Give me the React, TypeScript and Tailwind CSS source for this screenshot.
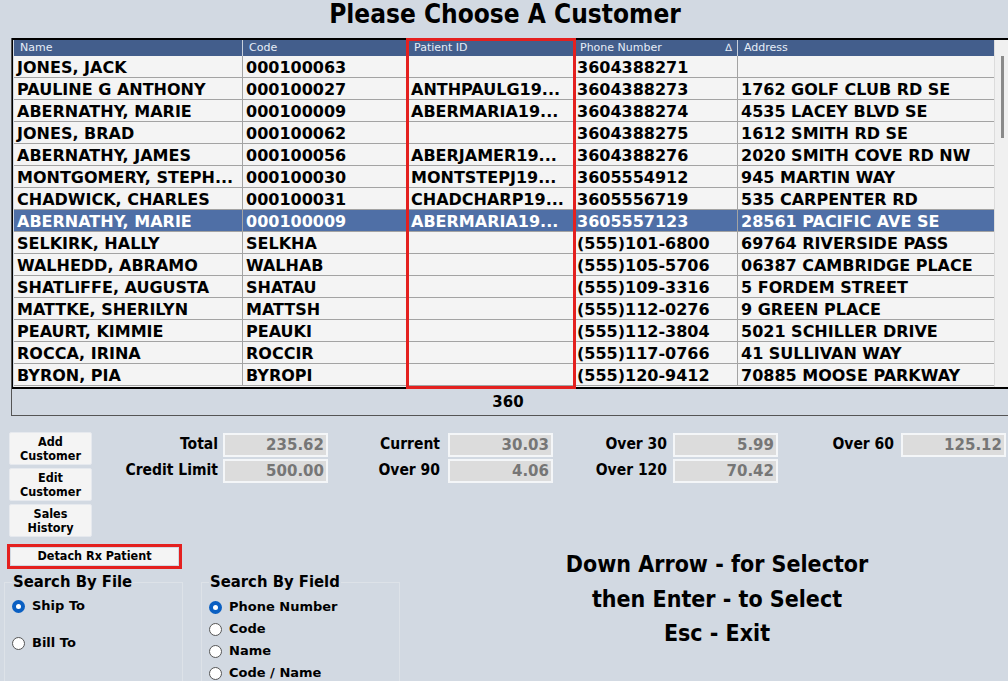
import React from "react";

const rows = [
  ["JONES, JACK", "000100063", "", "3604388271", ""],
  ["PAULINE G ANTHONY", "000100027", "ANTHPAULG19...", "3604388273", "1762 GOLF CLUB RD SE"],
  ["ABERNATHY, MARIE", "000100009", "ABERMARIA19...", "3604388274", "4535 LACEY BLVD SE"],
  ["JONES, BRAD", "000100062", "", "3604388275", "1612 SMITH RD SE"],
  ["ABERNATHY, JAMES", "000100056", "ABERJAMER19...", "3604388276", "2020 SMITH COVE RD NW"],
  ["MONTGOMERY, STEPH...", "000100030", "MONTSTEPJ19...", "3605554912", "945 MARTIN WAY"],
  ["CHADWICK, CHARLES", "000100031", "CHADCHARP19...", "3605556719", "535 CARPENTER RD"],
  ["ABERNATHY, MARIE", "000100009", "ABERMARIA19...", "3605557123", "28561 PACIFIC AVE SE"],
  ["SELKIRK, HALLY", "SELKHA", "", "(555)101-6800", "69764 RIVERSIDE PASS"],
  ["WALHEDD, ABRAMO", "WALHAB", "", "(555)105-5706", "06387 CAMBRIDGE PLACE"],
  ["SHATLIFFE, AUGUSTA", "SHATAU", "", "(555)109-3316", "5 FORDEM STREET"],
  ["MATTKE, SHERILYN", "MATTSH", "", "(555)112-0276", "9 GREEN PLACE"],
  ["PEAURT, KIMMIE", "PEAUKI", "", "(555)112-3804", "5021 SCHILLER DRIVE"],
  ["ROCCA, IRINA", "ROCCIR", "", "(555)117-0766", "41 SULLIVAN WAY"],
  ["BYRON, PIA", "BYROPI", "", "(555)120-9412", "70885 MOOSE PARKWAY"],
];

const wide = { fontFamily: '"DejaVu Sans", Verdana, sans-serif' } as React.CSSProperties;
const tah = { fontFamily: '"DejaVu Sans Condensed", "DejaVu Sans", Tahoma, sans-serif', fontStretch: "condensed" } as React.CSSProperties;

function Field({ label, value, lw }: { label: string; value: string; lw: string }) {
  return (
    <div className="flex items-center h-[26px]">
      <div className={`${lw} text-right pr-[5px] text-[15.5px] font-bold text-black whitespace-nowrap`} style={tah}>{label}</div>
      <div className="w-[105px] h-[24px] bg-[#dcdcdc] border-2 border-[#f4f6f8] flex items-center justify-end pr-[2px] text-[15px] font-bold text-[#767676]" style={wide}>
        {value}
      </div>
    </div>
  );
}

function Btn({ children }: { children: React.ReactNode }) {
  return (
    <div className="w-[83px] h-[33px] bg-[#f4f4f4] rounded-[2px] border border-[#e6e9ee] flex flex-col items-center justify-center leading-[14px] text-[12.5px] font-bold text-black" style={tah}>
      {children}
    </div>
  );
}

function Radio({ checked, label, cls }: { checked?: boolean; label: string; cls?: string }) {
  return (
    <div className={`flex items-center gap-[7px] h-[16px] ${cls ?? ""}`}>
      {checked ? (
        <div className="w-[13px] h-[13px] rounded-full bg-[#0a5fc2] flex items-center justify-center">
          <div className="w-[5px] h-[5px] rounded-full bg-white" />
        </div>
      ) : (
        <div className="w-[13px] h-[13px] rounded-full bg-white border border-[#555]" />
      )}
      <span className="text-[13px] font-bold text-black leading-[16px]" style={wide}>{label}</span>
    </div>
  );
}

export default function App() {
  const cols = "grid grid-cols-[229px_165px_166px_164px_256px]";
  return (
    <div className="w-[1008px] h-[681px] bg-[#d2d9e2] overflow-hidden relative">
      <div className="h-[38px] flex items-center justify-center pl-[2px] pb-[10px] text-[26px] font-bold text-black whitespace-nowrap" style={tah}>
        Please Choose A Customer
      </div>

      <div className="ml-[11px] border-l border-b border-[#555]">
        <div className="relative border-t-2 border-b-2 border-black flex">
          <div className="pl-[1px] border-l border-black">
            <div className={`${cols} h-[16px] bg-[#435e8c] text-[11px] text-[#e6edf7] leading-[16px]`} style={wide}>
              <div className="pl-[6px] border-r border-[#c8d0dc]">Name</div>
              <div className="pl-[6px] border-r border-[#c8d0dc]">Code</div>
              <div className="pl-[6px] border-r border-[#c8d0dc]">Patient ID</div>
              <div className="pl-[6px] pr-[5px] border-r border-[#c8d0dc] flex justify-between">
                <span>Phone Number</span>
                <span className="text-[10px]">∆</span>
              </div>
              <div className="pl-[6px]">Address</div>
            </div>
            {rows.map((r, i) => {
              const sel = i === 7;
              return (
                <div
                  key={i}
                  className={`${cols} h-[22px] border-b border-[#a3a3a3] text-[16px] font-bold leading-[20px] ${sel ? "bg-[#4f6fa6] text-white" : "bg-[#f4f4f4] text-black"}`}
                  style={wide}
                >
                  {r.map((c, j) => (
                    <div key={j} className={`pl-[3px] pt-[2px] whitespace-nowrap overflow-hidden ${j < 4 ? "border-r border-[#a3a3a3]" : ""}`}>
                      {c}
                    </div>
                  ))}
                </div>
              );
            })}
            <div className="h-[1px] bg-[#f4f4f4]" />
          </div>
          <div className="flex-1 bg-[#f0f0f0] border-l border-[#dcdcdc] relative">
            <div className="absolute left-[6px] top-[16px] w-[3px] h-[82px] bg-[#8a8a8a]" />
          </div>
          <div className="absolute left-[394px] -top-[2px] w-[170px] h-[351px] border-[3px] border-[#e4201f] pointer-events-none" />
        </div>
        <div className="h-[26px] flex items-center justify-center pr-[4px] text-[15px] font-bold text-black" style={wide}>
          360
        </div>
      </div>

      <div className="flex mt-[16px]">
        <div className="pl-[9px] flex flex-col gap-[3px]">
          <Btn>Add<span>Customer</span></Btn>
          <Btn>Edit<span>Customer</span></Btn>
          <Btn>Sales<span>History</span></Btn>
        </div>
        <div className="flex flex-col">
          <Field label="Total" value="235.62" lw="w-[131px]" />
          <Field label="Credit Limit" value="500.00" lw="w-[131px]" />
        </div>
        <div className="flex flex-col">
          <Field label="Current" value="30.03" lw="w-[120px] pr-[8px]" />
          <Field label="Over 90" value="4.06" lw="w-[120px] pr-[8px]" />
        </div>
        <div className="flex flex-col">
          <Field label="Over 30" value="5.99" lw="w-[120px] pr-[6px]" />
          <Field label="Over 120" value="70.42" lw="w-[120px] pr-[6px]" />
        </div>
        <div className="flex flex-col">
          <Field label="Over 60" value="125.12" lw="w-[123px] pr-[7px]" />
        </div>
      </div>

      <div className="flex">
        <div className="w-[420px]">
          <div className="ml-[7px] mt-[7px] w-[175px] h-[25px] border-[3px] border-[#e4201f] p-[1px]">
            <div className="h-full bg-[#f4f4f4] flex items-center justify-center text-[12.5px] font-bold text-black" style={tah}>
              Detach Rx Patient
            </div>
          </div>
          <div className="flex mt-[4px]">
            <div className="relative ml-[4px] w-[179px] h-[120px] border border-[#dde2e8] mt-[9px]">
              <div className="absolute left-[7px] -top-[11px] bg-[#d2d9e2] px-[1px] text-[16.5px] font-bold text-black leading-[20px] whitespace-nowrap" style={tah}>Search By File</div>
              <Radio checked label="Ship To" cls="absolute left-[7px] top-[15px]" />
              <Radio label="Bill To" cls="absolute left-[7px] top-[52px]" />
            </div>
            <div className="relative ml-[18px] w-[199px] h-[120px] border border-[#dde2e8] mt-[9px]">
              <div className="absolute left-[7px] -top-[11px] bg-[#d2d9e2] px-[1px] text-[16.5px] font-bold text-black leading-[20px] whitespace-nowrap" style={tah}>Search By Field</div>
              <div className="pt-[16px] pl-[7px] flex flex-col gap-[6px]">
                <Radio checked label="Phone Number" />
                <Radio label="Code" />
                <Radio label="Name" />
                <Radio label="Code / Name" />
              </div>
            </div>
          </div>
        </div>
        <div className="flex-1 flex flex-col items-center pt-[10px] pl-[6px] text-[23px] font-bold text-black leading-[34.5px]" style={tah}>
          <div className="whitespace-nowrap">Down Arrow - for Selector</div>
          <div className="whitespace-nowrap">then Enter - to Select</div>
          <div className="whitespace-nowrap">Esc - Exit</div>
        </div>
      </div>
    </div>
  );
}
